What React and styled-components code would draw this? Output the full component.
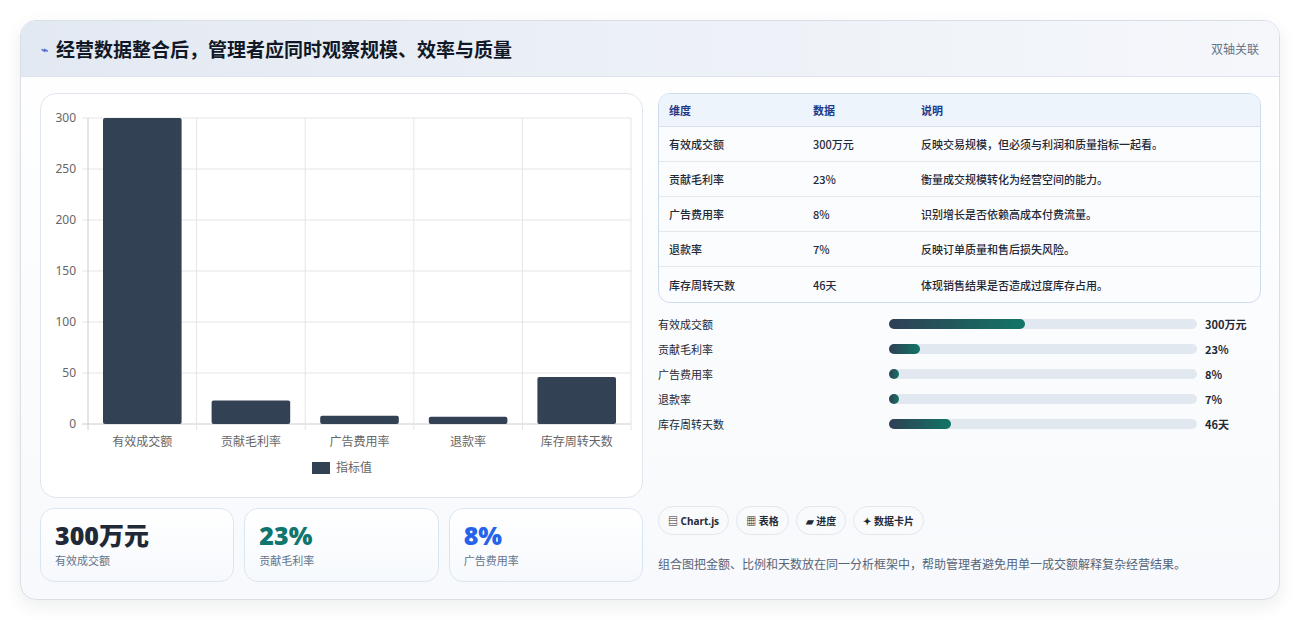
import React from "react";
import styled, { createGlobalStyle } from "styled-components";

const G = createGlobalStyle`
  body{margin:0;background:#fff;font-family:"Noto Sans","Noto Sans CJK SC",sans-serif;}
  *{box-sizing:border-box;}
`;
const Page = styled.div`padding:20px 20px 20px 20px;width:1300px;height:620px;`;
const Card = styled.div`
  width:1260px;height:580px;border:1px solid #d9dee7;border-radius:16px;overflow:hidden;
  background:linear-gradient(180deg,#fff,#f7f9fc);box-shadow:0 6px 18px rgba(15,23,42,.08);
  display:flex;flex-direction:column;
`;
const Header = styled.div`
  height:56px;flex:none;display:flex;align-items:center;justify-content:space-between;padding:0 20px;
  background:linear-gradient(90deg,#e3e9f2,#eef2f8 60%,#f5f7fb);border-bottom:1px solid #dde4ee;
`;
const Title = styled.h1`margin:0;font-size:19px;font-weight:700;color:#111827;display:flex;align-items:center;gap:8px;
  font-family:"Noto Sans CJK SC",sans-serif;`;
const Icon = styled.span`color:#4f6fd8;font-size:12px;`;
const Tag = styled.span`font-size:12px;color:#64748b;font-family:"Noto Sans CJK SC",sans-serif;`;
const Body = styled.div`flex:1;display:grid;grid-template-columns:603px 603px;gap:15px;padding:16px 19px 19px 19px;`;
const Col = styled.div`display:flex;flex-direction:column;gap:10px;`;
const ChartBox = styled.div`height:405px;border:1px solid #e0e6ef;border-radius:16px;background:#fff;`;
const Kpis = styled.div`display:grid;grid-template-columns:repeat(3,1fr);gap:10px;`;
const Kpi = styled.div`height:74px;border:1px solid #dbe6f3;border-radius:14px;background:linear-gradient(180deg,#fff,#f6f9fd);
  padding:11px 14px;font-family:"Noto Sans CJK SC",sans-serif;`;
const KVal = styled.div`font-size:25px;font-weight:800;line-height:30px;color:${p=>p.c};font-family:"Open Sans","Noto Sans CJK SC",sans-serif;`;
const KLab = styled.div`font-size:11px;color:#64748b;margin-top:2px;`;
const Table = styled.table`width:100%;border-collapse:separate;border-spacing:0;border:1px solid #cfdcec;border-radius:12px;overflow:hidden;
  font-family:"Noto Sans CJK SC",sans-serif;font-size:11px;color:#1f2937;background:#fbfcfe;
  th{background:#eef4fc;color:#1e3a8a;text-align:left;font-weight:600;height:33px;padding:0 10px;border-bottom:1px solid #d7e0ec;}
  td{height:35px;padding:0 10px;border-bottom:1px solid #e3e8ef;font-weight:500;}
  tr:last-child td{border-bottom:none;}
`;
const Bars = styled.div`display:flex;flex-direction:column;gap:7px;padding-top:2px;`;
const BarRow = styled.div`display:grid;grid-template-columns:223px 308px auto;gap:8px;align-items:center;height:18px;
  font-family:"Noto Sans CJK SC",sans-serif;font-size:11px;color:#1f2937;`;
const Track = styled.div`height:10px;border-radius:5px;background:#e2e8f0;`;
const Fill = styled.div`height:100%;border-radius:5px;background:linear-gradient(90deg,#2f3f55,#127566);min-width:10px;`;
const BVal = styled.span`font-weight:700;`;
const Spacer = styled.div`flex:1;`;
const Chips = styled.div`display:flex;gap:7px;`;
const Chip = styled.span`height:29px;padding:0 9px;border:1px solid #e2e7ee;border-radius:15px;background:#f8fafc;display:flex;align-items:center;gap:4px;
  font-size:10px;font-weight:700;color:#1f2937;font-family:"Noto Sans","Noto Sans CJK SC",sans-serif;`;
const Note = styled.p`margin:10px 0 10px;font-size:12px;color:#55657a;font-family:"Noto Sans CJK SC",sans-serif;`;

const data=[["有效成交额",300,"300万元","反映交易规模，但必须与利润和质量指标一起看。",44],
["贡献毛利率",23,"23%","衡量成交规模转化为经营空间的能力。",10],
["广告费用率",8,"8%","识别增长是否依赖高成本付费流量。",3],
["退款率",7,"7%","反映订单质量和售后损失风险。",3],
["库存周转天数",46,"46天","体现销售结果是否造成过度库存占用。",20]];

function Chart(){
  const x0=47,x1=590,y0=330,yt=24,cw=(x1-x0)/5;
  const sy=v=>y0-(v/300)*(y0-yt);
  const f={fontFamily:"Noto Sans, Noto Sans CJK SC, sans-serif",fontSize:12,fill:"#666"};
  return <svg width="601" height="403">
    {[0,50,100,150,200,250,300].map(v=><g key={v}>
      <line x1={x0-6} x2={x1} y1={sy(v)} y2={sy(v)} stroke={v===0?"#c8ccd2":"#e5e5e5"}/>
      <text x={x0-12} y={sy(v)+4} textAnchor="end" {...f}>{v}</text></g>)}
    {[0,1,2,3,4,5].map(i=><line key={i} x1={x0+i*cw} x2={x0+i*cw} y1={yt} y2={y0+6} stroke={i===0?"#c8ccd2":"#e5e5e5"}/>)}
    {data.map((d,i)=><g key={i}>
      <rect x={x0+i*cw+15} y={sy(d[1])} width={cw-30} height={y0-sy(d[1])} rx="2" fill="#334155"/>
      <text x={x0+i*cw+cw/2} y={y0+22} textAnchor="middle" {...f}>{d[0]}</text></g>)}
    <rect x="271" y="368" width="18" height="12" fill="#334155"/>
    <text x="295" y="378" {...f}>指标值</text>
  </svg>;
}

export default function App(){
  return <Page><G/><Card>
    <Header><Title><Icon>⌁</Icon>经营数据整合后，管理者应同时观察规模、效率与质量</Title><Tag>双轴关联</Tag></Header>
    <Body>
      <Col>
        <ChartBox><Chart/></ChartBox>
        <Kpis>
          <Kpi><KVal c="#1f2937">300万元</KVal><KLab>有效成交额</KLab></Kpi>
          <Kpi><KVal c="#0f766e">23%</KVal><KLab>贡献毛利率</KLab></Kpi>
          <Kpi><KVal c="#2563eb">8%</KVal><KLab>广告费用率</KLab></Kpi>
        </Kpis>
      </Col>
      <Col>
        <Table><thead><tr><th style={{width:144}}>维度</th><th style={{width:108}}>数据</th><th>说明</th></tr></thead>
          <tbody>{data.map(d=><tr key={d[0]}><td>{d[0]}</td><td>{d[2]}</td><td>{d[3]}</td></tr>)}</tbody></Table>
        <Bars>{data.map(d=><BarRow key={d[0]}><span>{d[0]}</span><Track><Fill style={{width:d[4]+"%"}}/></Track><BVal>{d[2]}</BVal></BarRow>)}</Bars>
        <Spacer/>
        <Chips><Chip>▤ Chart.js</Chip><Chip>▦ 表格</Chip><Chip>▰ 进度</Chip><Chip>✦ 数据卡片</Chip></Chips>
        <Note>组合图把金额、比例和天数放在同一分析框架中，帮助管理者避免用单一成交额解释复杂经营结果。</Note>
      </Col>
    </Body>
  </Card></Page>;
}
